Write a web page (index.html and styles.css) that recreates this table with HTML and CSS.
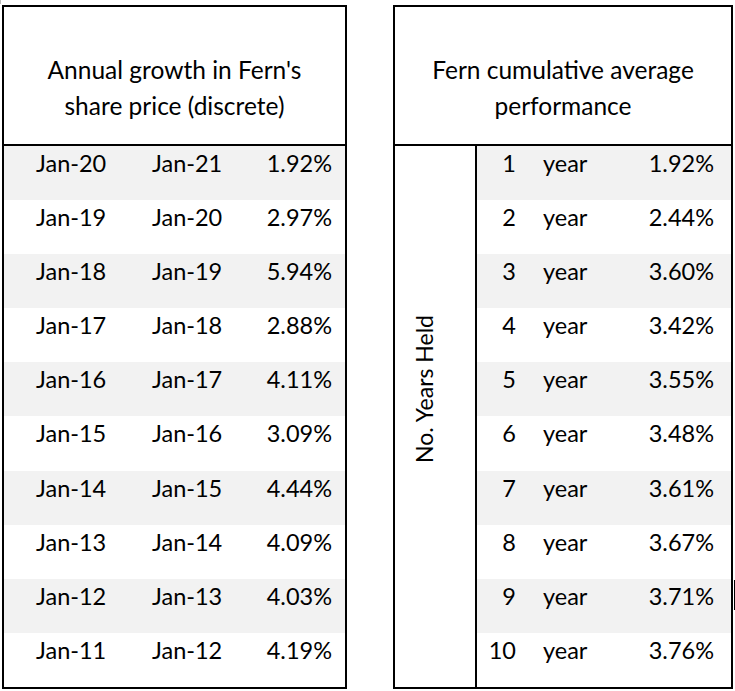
FILE: index.html
```html
<!DOCTYPE html>
<html lang="en">
<head>
<meta charset="utf-8">
<title>Fern share price</title>
<link rel="stylesheet" href="styles.css">
</head>
<body>
<div class="page">
  <section class="tbl growth">
    <div class="head">Annual growth in Fern's<br>share price (discrete)</div>
    <div class="rows">
      <div class="row shade"><span class="c1">Jan-20</span><span class="c2">Jan-21</span><span class="c3">1.92%</span></div>
      <div class="row"><span class="c1">Jan-19</span><span class="c2">Jan-20</span><span class="c3">2.97%</span></div>
      <div class="row shade"><span class="c1">Jan-18</span><span class="c2">Jan-19</span><span class="c3">5.94%</span></div>
      <div class="row"><span class="c1">Jan-17</span><span class="c2">Jan-18</span><span class="c3">2.88%</span></div>
      <div class="row shade"><span class="c1">Jan-16</span><span class="c2">Jan-17</span><span class="c3">4.11%</span></div>
      <div class="row"><span class="c1">Jan-15</span><span class="c2">Jan-16</span><span class="c3">3.09%</span></div>
      <div class="row shade"><span class="c1">Jan-14</span><span class="c2">Jan-15</span><span class="c3">4.44%</span></div>
      <div class="row"><span class="c1">Jan-13</span><span class="c2">Jan-14</span><span class="c3">4.09%</span></div>
      <div class="row shade"><span class="c1">Jan-12</span><span class="c2">Jan-13</span><span class="c3">4.03%</span></div>
      <div class="row"><span class="c1">Jan-11</span><span class="c2">Jan-12</span><span class="c3">4.19%</span></div>
    </div>
  </section>
  <section class="tbl cum">
    <div class="head">Fern cumulative average<br>performance</div>
    <div class="body">
      <div class="label"><span class="label-text">No. Years Held</span></div>
      <div class="rows">
        <div class="row shade"><span class="n">1</span><span class="y">year</span><span class="p">1.92%</span></div>
        <div class="row"><span class="n">2</span><span class="y">year</span><span class="p">2.44%</span></div>
        <div class="row shade"><span class="n">3</span><span class="y">year</span><span class="p">3.60%</span></div>
        <div class="row"><span class="n">4</span><span class="y">year</span><span class="p">3.42%</span></div>
        <div class="row shade"><span class="n">5</span><span class="y">year</span><span class="p">3.55%</span></div>
        <div class="row"><span class="n">6</span><span class="y">year</span><span class="p">3.48%</span></div>
        <div class="row shade"><span class="n">7</span><span class="y">year</span><span class="p">3.61%</span></div>
        <div class="row"><span class="n">8</span><span class="y">year</span><span class="p">3.67%</span></div>
        <div class="row shade"><span class="n">9</span><span class="y">year</span><span class="p">3.71%</span></div>
        <div class="row"><span class="n">10</span><span class="y">year</span><span class="p">3.76%</span></div>
      </div>
    </div>
  </section>
</div>
<span class="mark-tl"></span>
<span class="mark-r"></span>
</body>
</html>
```

FILE: styles.css
```css
html, body {
  margin: 0;
  padding: 0;
  background: #fff;
}
body {
  font-family: Lato, "Liberation Sans", sans-serif;
  color: #000;
  position: relative;
  width: 735px;
  height: 691px;
  overflow: hidden;
}
.page {
  display: flex;
  align-items: flex-start;
  gap: 46px;
  padding: 5px 0 0 2px;
}
.tbl {
  border: 2px solid #000;
  display: flex;
  flex-direction: column;
}
.growth { width: 341px; }
.cum { width: 336px; }

.head {
  box-sizing: border-box;
  height: 139px;
  border-bottom: 2px solid #000;
  padding-bottom: 20px;
  display: flex;
  flex-direction: column;
  justify-content: flex-end;
  text-align: center;
  font-size: 24.5px;
  line-height: 36px;
}

.rows {
  display: grid;
  grid-template-rows: repeat(10, 1fr);
  height: 541px;
}
.row {
  display: grid;
  align-items: start;
  font-size: 23.5px;
  line-height: 26px;
  padding-top: 4px;
}
.row.shade { background: #f2f2f2; }

.growth .row { grid-template-columns: 116px 116px 1fr; }
.c1, .c2 { padding-left: 32px; }
.c3 { text-align: right; padding-right: 13px; }

.body {
  display: flex;
}
.label {
  border-right: 2px solid #000;
  display: flex;
  align-items: center;
  justify-content: center;
  box-sizing: border-box;
  padding: 0 22px 56px 0;
  width: 82px;
}
.label-text {
  writing-mode: vertical-rl;
  transform: rotate(180deg);
  font-size: 23px;
  line-height: 26px;
  white-space: nowrap;
}
.cum .rows { flex: 1; }
.cum .row { grid-template-columns: 39px 1fr auto; }
.n { text-align: right; }
.y { padding-left: 27px; }
.p { text-align: right; padding-right: 17px; }

.mark-tl {
  position: absolute;
  left: 0;
  top: 0;
  width: 1px;
  height: 4px;
  background: #bbb;
}
.mark-r {
  position: absolute;
  left: 734px;
  top: 580px;
  width: 1px;
  height: 30px;
  background: #000;
}
```
